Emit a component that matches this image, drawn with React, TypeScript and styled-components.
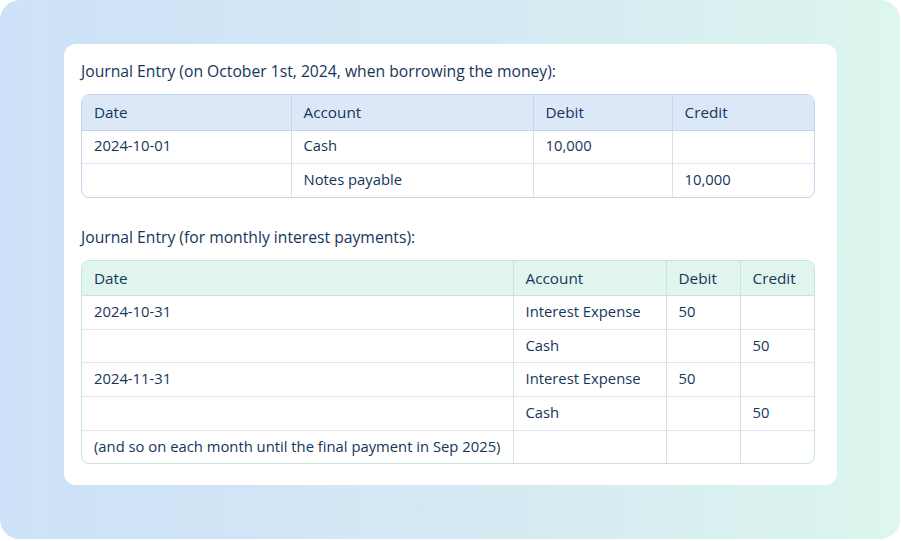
import React from "react";
import styled, { createGlobalStyle } from "styled-components";

const Global = createGlobalStyle`
  html, body { margin: 0; padding: 0; background: #ffffff; }
  body { font-family: "Open Sans", "Noto Sans", sans-serif; }
`;

const Frame = styled.div`
  width: 900px;
  height: 539px;
  box-sizing: border-box;
  border-radius: 20px;
  background: linear-gradient(90deg, #cde1f8 0%, #d5e9f3 55%, #ddf6ee 100%);
  padding: 44px 63px 0 64px;
`;

const Card = styled.div`
  background: #ffffff;
  border-radius: 12px;
  box-sizing: border-box;
  height: 441px;
  padding: 16px 22px 21px 17px;
  display: flex;
  flex-direction: column;
`;

const Title = styled.div<{ $gap?: number }>`
  font-size: 15.7px;
  line-height: 22px;
  color: #16355a;
  margin-top: ${(p) => p.$gap ?? 0}px;
  margin-bottom: 12px;
`;

const TableWrap = styled.div<{ $border: string }>`
  border: 1px solid ${(p) => p.$border};
  border-radius: 8px;
  overflow: hidden;
`;

const Table = styled.table`
  width: 100%;
  border-collapse: collapse;
  table-layout: fixed;
`;

const Th = styled.th<{ $bg: string; $border: string }>`
  background: ${(p) => p.$bg};
  text-align: left;
  font-weight: 400;
  font-size: 15.3px;
  color: #16355a;
  height: 35px;
  box-sizing: border-box;
  padding: 0 12px 1px;
  border-left: 1px solid ${(p) => p.$border};
  border-bottom: 1px solid ${(p) => p.$border};
  &:first-child { border-left: none; }
`;

const Td = styled.td`
  font-size: 14.8px;
  color: #16355a;
  height: 33.6px;
  padding: 0 12px 3px;
  box-sizing: border-box;
  white-space: nowrap;
  border-left: 1px solid #d8dfe9;
  border-top: 1px solid #e1e6ee;
  &:first-child { border-left: none; }
`;

const Row = styled.tr`
  &:first-child td { border-top: none; }
`;

type TableSpec = {
  widths: number[];
  head: string[];
  rows: string[][];
  bg: string;
  border: string;
};

const DataTable = ({ widths, head, rows, bg, border }: TableSpec) => (
  <TableWrap $border={border}>
    <Table>
      <colgroup>
        {widths.map((w, i) => (
          <col key={i} style={{ width: w }} />
        ))}
      </colgroup>
      <thead>
        <tr>
          {head.map((h) => (
            <Th key={h} $bg={bg} $border={border}>
              {h}
            </Th>
          ))}
        </tr>
      </thead>
      <tbody>
        {rows.map((r, i) => (
          <Row key={i}>
            {r.map((c, j) => (
              <Td key={j}>{c}</Td>
            ))}
          </Row>
        ))}
      </tbody>
    </Table>
  </TableWrap>
);

export default function App() {
  return (
    <>
      <Global />
      <Frame>
        <Card>
          <Title>Journal Entry (on October 1st, 2024, when borrowing the money):</Title>
          <DataTable
            widths={[209, 242, 139, 144]}
            head={["Date", "Account", "Debit", "Credit"]}
            rows={[
              ["2024-10-01", "Cash", "10,000", ""],
              ["", "Notes payable", "", "10,000"],
            ]}
            bg="#dce8f8"
            border="#c5d6ec"
          />
          <Title $gap={28}>Journal Entry (for monthly interest payments):</Title>
          <DataTable
            widths={[431, 153, 74, 76]}
            head={["Date", "Account", "Debit", "Credit"]}
            rows={[
              ["2024-10-31", "Interest Expense", "50", ""],
              ["", "Cash", "", "50"],
              ["2024-11-31", "Interest Expense", "50", ""],
              ["", "Cash", "", "50"],
              ["(and so on each month until the final payment in Sep 2025)", "", "", ""],
            ]}
            bg="#dff5ee"
            border="#c7e3da"
          />
        </Card>
      </Frame>
    </>
  );
}
